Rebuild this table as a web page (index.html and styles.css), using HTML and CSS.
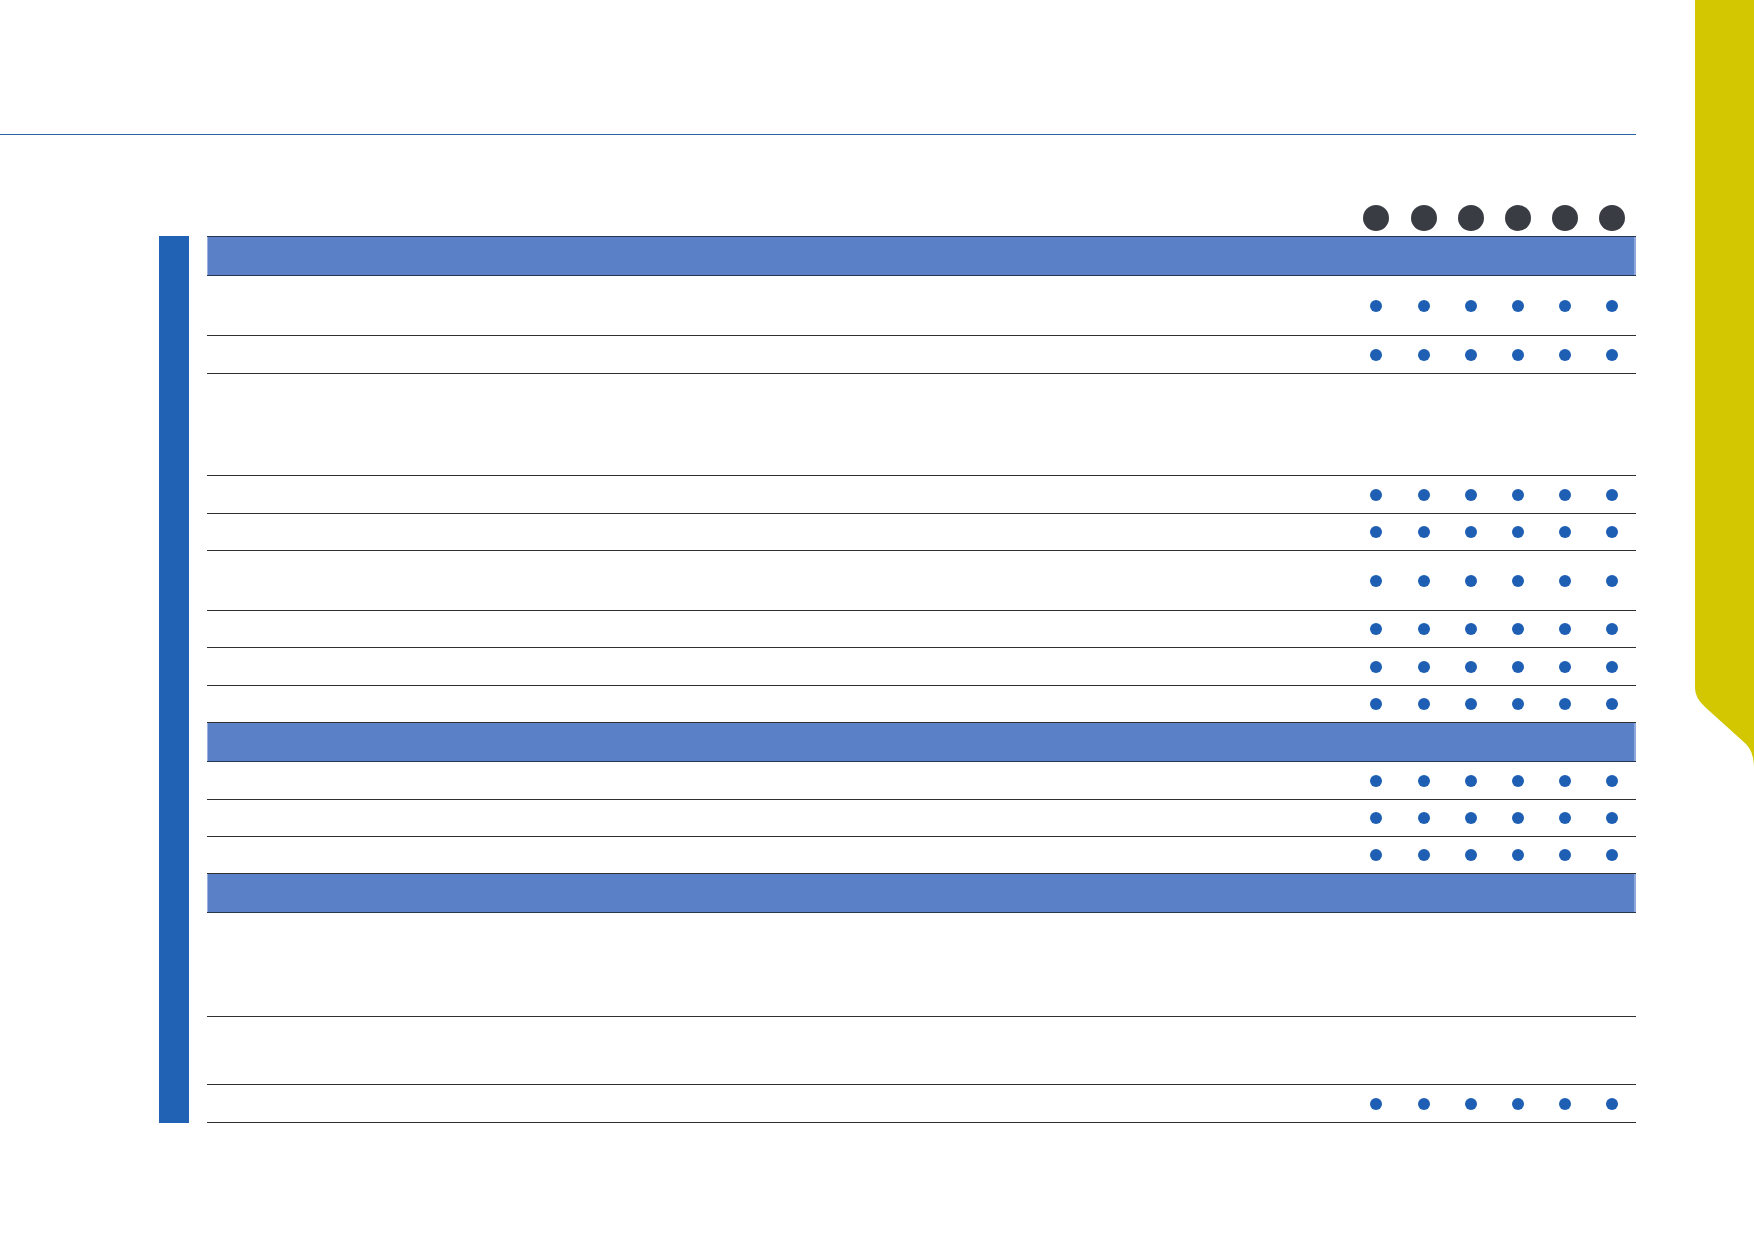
FILE: index.html
```html
<!DOCTYPE html>
<html lang="en">
<head>
<meta charset="utf-8">
<title>Table</title>
<link rel="stylesheet" href="styles.css">
</head>
<body>
<div class="main">
  <div class="rule"></div>
  <div class="content">
    <div class="legend">
      <span></span>
      <i class="big"></i><i class="big"></i><i class="big"></i><i class="big"></i><i class="big"></i><i class="big"></i>
    </div>
    <div class="body">
      <div class="bar"></div>
      <div class="table">
        <div class="row head first"></div>
        <div class="row h60"><span></span><i class="dot"></i><i class="dot"></i><i class="dot"></i><i class="dot"></i><i class="dot"></i><i class="dot"></i></div>
        <div class="row h38"><span></span><i class="dot"></i><i class="dot"></i><i class="dot"></i><i class="dot"></i><i class="dot"></i><i class="dot"></i></div>
        <div class="row h102"></div>
        <div class="row h38"><span></span><i class="dot"></i><i class="dot"></i><i class="dot"></i><i class="dot"></i><i class="dot"></i><i class="dot"></i></div>
        <div class="row h37"><span></span><i class="dot"></i><i class="dot"></i><i class="dot"></i><i class="dot"></i><i class="dot"></i><i class="dot"></i></div>
        <div class="row h60"><span></span><i class="dot"></i><i class="dot"></i><i class="dot"></i><i class="dot"></i><i class="dot"></i><i class="dot"></i></div>
        <div class="row h37"><span></span><i class="dot"></i><i class="dot"></i><i class="dot"></i><i class="dot"></i><i class="dot"></i><i class="dot"></i></div>
        <div class="row h38"><span></span><i class="dot"></i><i class="dot"></i><i class="dot"></i><i class="dot"></i><i class="dot"></i><i class="dot"></i></div>
        <div class="row h37"><span></span><i class="dot"></i><i class="dot"></i><i class="dot"></i><i class="dot"></i><i class="dot"></i><i class="dot"></i></div>
        <div class="row head"></div>
        <div class="row h38"><span></span><i class="dot"></i><i class="dot"></i><i class="dot"></i><i class="dot"></i><i class="dot"></i><i class="dot"></i></div>
        <div class="row h37"><span></span><i class="dot"></i><i class="dot"></i><i class="dot"></i><i class="dot"></i><i class="dot"></i><i class="dot"></i></div>
        <div class="row h37"><span></span><i class="dot"></i><i class="dot"></i><i class="dot"></i><i class="dot"></i><i class="dot"></i><i class="dot"></i></div>
        <div class="row head"></div>
        <div class="row h104"></div>
        <div class="row h68"></div>
        <div class="row h38"><span></span><i class="dot"></i><i class="dot"></i><i class="dot"></i><i class="dot"></i><i class="dot"></i><i class="dot"></i></div>
      </div>
    </div>
  </div>
</div>
<aside class="tab">
  <svg width="59" height="770" viewBox="0 0 59 770"><path d="M0 0 H59 V768 Q59 752 51 744 L10 707 Q0 698 0 688 Z" fill="#d2c700"/></svg>
</aside>
</body>
</html>
```
FILE: styles.css
```css
html, body {
  margin: 0;
  padding: 0;
  background: #ffffff;
}
body {
  width: 1754px;
  height: 1240px;
  overflow: hidden;
  display: flex;
  font-family: "Liberation Sans", Arial, sans-serif;
}
.main {
  flex: none;
  width: 1695px;
  padding-top: 134px;
  box-sizing: border-box;
}
.rule {
  width: 1636px;
  height: 1px;
  background: #2a64a0;
}
.content {
  margin: 70px 0 0 159px;
  width: 1477px;
}
.legend {
  display: grid;
  grid-template-columns: 1fr repeat(6, 47.2px);
  margin-left: 48px;
  height: 26px;
  margin-bottom: 5px;
  align-items: center;
}
.big {
  justify-self: center;
  width: 26px;
  height: 26px;
  border-radius: 50%;
  background: #393c42;
}
.body {
  display: flex;
}
.bar {
  width: 30px;
  margin-right: 18px;
  background: #2262b5;
  flex: none;
}
.table {
  width: 1429px;
  display: flex;
  flex-direction: column;
}
.row {
  display: grid;
  grid-template-columns: 1fr repeat(6, 47.2px);
  align-items: center;
  box-sizing: border-box;
  border-bottom: 1px solid #2f2f2f;
}
.head {
  height: 39px;
  background: #5a80c8;
  border-bottom-color: #26364e;
  box-shadow: inset 1px 0 0 #9bb1de, inset -2px 0 0 #8ea8dc;
}
.head.first {
  height: 40px;
  border-top: 1px solid #26364e;
}
.h37 { height: 37px; }
.h38 { height: 38px; }
.h60 { height: 60px; }
.h68 { height: 68px; }
.h102 { height: 102px; }
.h104 { height: 104px; }
.dot {
  justify-self: center;
  width: 12px;
  height: 12px;
  border-radius: 50%;
  background: #1e5fb4;
}
.tab {
  flex: none;
  width: 59px;
  line-height: 0;
}
.tab svg {
  display: block;
}
```
